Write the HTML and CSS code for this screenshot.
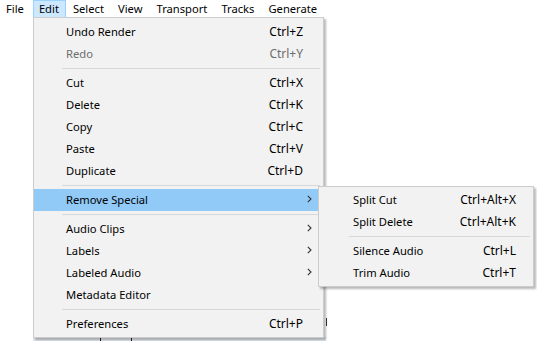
FILE: index.html
```html
<!DOCTYPE html>
<html>
<head>
<meta charset="utf-8">
<link rel="stylesheet" href="styles.css">
</head>
<body>
<div class="menubar">
  <span class="mb-item">File</span>
  <span class="mb-item active">Edit</span>
  <span class="mb-item">Select</span>
  <span class="mb-item">View</span>
  <span class="mb-item">Transport</span>
  <span class="mb-item">Tracks</span>
  <span class="mb-item">Generate</span>
</div>

<div class="backdrop">
  <span class="bd-line bd-a"></span>
  <span class="bd-line bd-b"></span>
</div>
<span class="tick"></span>

<div class="menu main">
  <div class="item"><span class="label">Undo Render</span><span class="key">Ctrl+Z</span><span class="arrow"></span></div>
  <div class="item disabled"><span class="label">Redo</span><span class="key">Ctrl+Y</span><span class="arrow"></span></div>
  <div class="sep"></div>
  <div class="item"><span class="label">Cut</span><span class="key">Ctrl+X</span><span class="arrow"></span></div>
  <div class="item"><span class="label">Delete</span><span class="key">Ctrl+K</span><span class="arrow"></span></div>
  <div class="item"><span class="label">Copy</span><span class="key">Ctrl+C</span><span class="arrow"></span></div>
  <div class="item"><span class="label">Paste</span><span class="key">Ctrl+V</span><span class="arrow"></span></div>
  <div class="item"><span class="label">Duplicate</span><span class="key">Ctrl+D</span><span class="arrow"></span></div>
  <div class="sep"></div>
  <div class="item hot"><span class="label">Remove Special</span><span class="key"></span><span class="arrow"><svg width="5" height="8" viewBox="0 0 5 8"><path d="M0.8 0.8 L4 4 L0.8 7.2" fill="none" stroke="#333" stroke-width="1.1"/></svg></span></div>
  <div class="sep"></div>
  <div class="item"><span class="label">Audio Clips</span><span class="key"></span><span class="arrow"><svg width="5" height="8" viewBox="0 0 5 8"><path d="M0.8 0.8 L4 4 L0.8 7.2" fill="none" stroke="#333" stroke-width="1.1"/></svg></span></div>
  <div class="item"><span class="label">Labels</span><span class="key"></span><span class="arrow"><svg width="5" height="8" viewBox="0 0 5 8"><path d="M0.8 0.8 L4 4 L0.8 7.2" fill="none" stroke="#333" stroke-width="1.1"/></svg></span></div>
  <div class="item"><span class="label">Labeled Audio</span><span class="key"></span><span class="arrow"><svg width="5" height="8" viewBox="0 0 5 8"><path d="M0.8 0.8 L4 4 L0.8 7.2" fill="none" stroke="#333" stroke-width="1.1"/></svg></span></div>
  <div class="item"><span class="label">Metadata Editor</span><span class="key"></span><span class="arrow"></span></div>
  <div class="sep"></div>
  <div class="item"><span class="label">Preferences</span><span class="key">Ctrl+P</span><span class="arrow"></span></div>
</div>

<div class="menu sub">
  <div class="item"><span class="label">Split Cut</span><span class="key">Ctrl+Alt+X</span></div>
  <div class="item"><span class="label">Split Delete</span><span class="key">Ctrl+Alt+K</span></div>
  <div class="sep"></div>
  <div class="item"><span class="label">Silence Audio</span><span class="key">Ctrl+L</span></div>
  <div class="item"><span class="label">Trim Audio</span><span class="key">Ctrl+T</span></div>
</div>
</body>
</html>
```

FILE: styles.css
```css
html, body {
  margin: 0;
  padding: 0;
  background: #ffffff;
  width: 537px;
  height: 341px;
  overflow: hidden;
  font-family: "Noto Sans", "Open Sans", "DejaVu Sans", sans-serif;
  font-size: 11.2px;
  color: #000;
}

.menubar {
  display: flex;
  height: 18px;
}

.mb-item {
  box-sizing: border-box;
  height: 18px;
  line-height: 15px;
  padding: 0 6px 0 5px;
  margin-right: 1px;
  border: 1px solid transparent;
}

.mb-item:first-child {
  margin-right: 2px;
}

.mb-item.active {
  background: #cce8ff;
  border-color: #99d1ff;
}

.menu {
  position: absolute;
  box-sizing: border-box;
  background: #f2f2f2;
  border: 1px solid #cccccc;
  box-shadow: 2px 2px 2px rgba(0, 0, 0, 0.28);
}

.main {
  left: 33px;
  top: 17px;
  width: 291px;
  padding: 3px 0 2px;
}

.sub {
  left: 318px;
  top: 186px;
  width: 216px;
  padding: 2px 0;
}

.item {
  box-sizing: border-box;
  display: flex;
  align-items: center;
  height: 22px;
  padding-bottom: 2px;
}

.main .item {
  padding-left: 32px;
}

.sub .item {
  padding-left: 34px;
  padding-right: 17px;
}

.label {
  flex: 1;
  white-space: nowrap;
}

.key {
  white-space: nowrap;
  font-size: 12px;
}

.main .arrow {
  width: 20px;
  display: flex;
  justify-content: flex-end;
  padding-right: 11px;
  box-sizing: border-box;
}

.main .arrow svg {
  display: block;
}

.disabled {
  color: #6d6d6d;
}

.hot {
  background: #91c9f7;
}

.sep {
  height: 7px;
  display: flex;
  align-items: center;
}

.sep::before {
  content: "";
  display: block;
  height: 1px;
  width: 100%;
  background: #d7d7d7;
}

.main .sep {
  margin: 0 3px 0 28px;
}

.sub .sep {
  margin: 0 3px 0 30px;
}

.backdrop {
  position: absolute;
  left: 33px;
  top: 337px;
  width: 293px;
  height: 4px;
  background: #e2e8ef;
}

.bd-line {
  position: absolute;
  top: 0;
  width: 1px;
  height: 4px;
  background: #222;
}

.bd-a { left: 67px; }
.bd-b { left: 98px; }

.tick {
  position: absolute;
  left: 326px;
  top: 318px;
  width: 1px;
  height: 8px;
  background: #333;
}
```
